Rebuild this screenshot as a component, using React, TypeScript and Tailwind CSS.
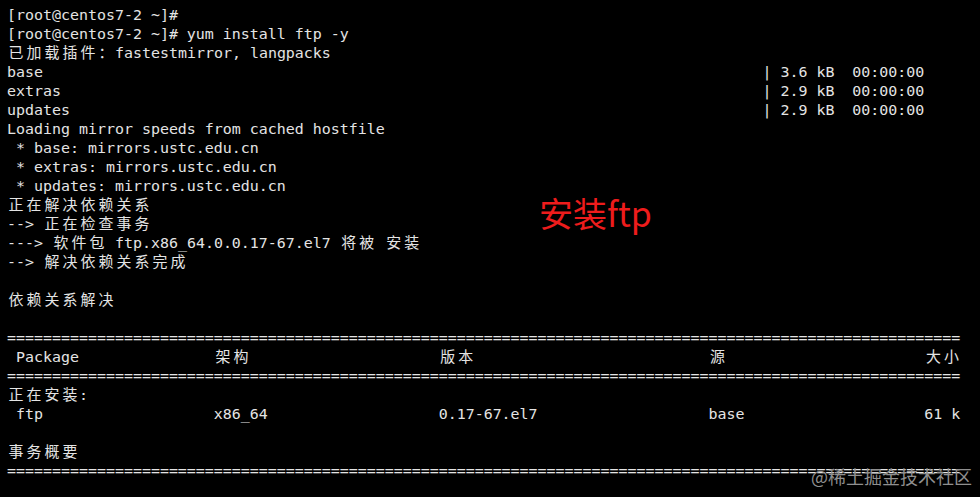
import React from 'react';

const pad = (s: string, n: number) => s + ' '.repeat(Math.max(0, n - s.length));
const rule = '='.repeat(106);

const lines: string[] = [
  '[root@centos7-2 ~]#',
  '[root@centos7-2 ~]# yum install ftp -y',
  '已加载插件：fastestmirror, langpacks',
  pad('base', 84) + '| 3.6 kB  00:00:00',
  pad('extras', 84) + '| 2.9 kB  00:00:00',
  pad('updates', 84) + '| 2.9 kB  00:00:00',
  'Loading mirror speeds from cached hostfile',
  ' * base: mirrors.ustc.edu.cn',
  ' * extras: mirrors.ustc.edu.cn',
  ' * updates: mirrors.ustc.edu.cn',
  '正在解决依赖关系',
  '--> 正在检查事务',
  '---> 软件包 ftp.x86_64.0.0.17-67.el7 将被 安装',
  '--> 解决依赖关系完成',
  '',
  '依赖关系解决',
  '',
  rule,
  ' Package' + ' '.repeat(15) + '架构' + ' '.repeat(21) + '版本' + ' '.repeat(26) + '源' + ' '.repeat(22) + '大小',
  rule,
  '正在安装:',
  pad(' ftp', 23) + pad('x86_64', 25) + pad('0.17-67.el7', 30) + pad('base', 24) + '61 k',
  '',
  '事务概要',
  rule,
];

const isWide = (ch: string) => ch.charCodeAt(0) >= 0x2e80;

// terminal cells: ascii 9px, cjk 18px
const TermLine: React.FC<{ text: string }> = ({ text }) => {
  const parts: React.ReactNode[] = [];
  let buf = '';
  Array.from(text).forEach((ch, i) => {
    if (isWide(ch)) {
      if (buf) {
        parts.push(<span key={`a${i}`}>{buf}</span>);
        buf = '';
      }
      parts.push(
        <span key={`w${i}`} className="inline-block w-[18px] text-center">
          {ch}
        </span>
      );
    } else {
      buf += ch;
    }
  });
  if (buf) parts.push(<span key="end">{buf}</span>);

  return <div className="h-[19px] whitespace-pre leading-[19px]">{parts}</div>;
};

export default function App() {
  return (
    <div className="relative h-[497px] w-[980px] overflow-hidden bg-black">
      <div className="pl-[7px] pt-[6px] font-['DejaVu_Sans_Mono','Noto_Sans_CJK_SC',monospace] text-[14.95px] text-[#e4e4e4]">
        {lines.map((l, i) => (
          <TermLine key={i} text={l} />
        ))}
      </div>

      <div className="absolute left-[539px] top-[196px] font-['Noto_Sans_CJK_SC',sans-serif] text-[34px] leading-none text-[#ee1c1c]">
        安装ftp
      </div>

      <div className="absolute left-[811px] top-[467px] font-['Noto_Sans_CJK_SC',sans-serif] text-[18px] leading-none text-[#8f8f8f]">
        @稀土掘金技术社区
      </div>
    </div>
  );
}
